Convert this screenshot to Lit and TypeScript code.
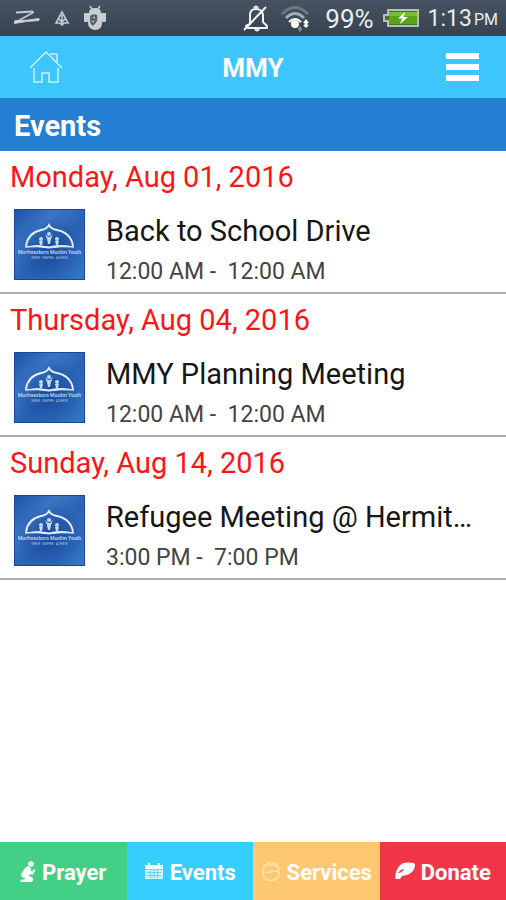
import { LitElement, html, css, svg } from "lit";
import { customElement, property } from "lit/decorators.js";

interface EventEntry {
  date: string;
  title: string;
  time: string;
}

const EVENTS: EventEntry[] = [
  { date: "Monday, Aug 01, 2016", title: "Back to School Drive", time: "12:00 AM -  12:00 AM" },
  { date: "Thursday, Aug 04, 2016", title: "MMY Planning Meeting", time: "12:00 AM -  12:00 AM" },
  { date: "Sunday, Aug 14, 2016", title: "Refugee Meeting @ Hermit…", time: "3:00 PM -  7:00 PM" },
];

@customElement("status-bar")
class StatusBar extends LitElement {
  static styles = css`
    :host {
      display: flex;
      align-items: center;
      justify-content: space-between;
      height: 36px;
      padding: 0 8px 0 14px;
      background: linear-gradient(#465362, #36424e);
      color: #e8edf2;
      line-height: 36px;
    }
    .group {
      display: flex;
      align-items: center;
    }
    .left {
      gap: 14px;
    }
    .wifi {
      margin-left: 12px;
    }
    .percent {
      margin: 2px 0 0 14px;
      font-size: 26px;
    }
    .battery {
      margin: 0 8px 0 8px;
    }
    .clock {
      margin-top: 2px;
      font-size: 23px;
    }
    .meridiem {
      font-size: 16px;
      margin: 4px 0 0 2px;
    }
    svg {
      display: block;
    }
  `;
  render() {
    return html`
      <div class="group left">
        <svg width="26" height="20" viewBox="0 0 26 20" fill="none" stroke="#c3c9cf" stroke-linejoin="round">
          <path d="M2 4.500L19 3.500" stroke-width="2" />
          <path d="M20 4L4 13" stroke-width="1.500" />
          <path d="M0 15.500L1 12.500Q12 13 25 10.500L25 12.500Q12 13 0 15.500Z" fill="#d5dadf" stroke-width="1" />
        </svg>
        <svg width="16" height="20" viewBox="0 0 16 20" fill="none" stroke="#c3c9cf" stroke-width="1.600">
          <path d="M8 4L2 15H6L8 17L10 15H14ZM8 7V16M5 11L8 14L11 11" />
        </svg>
        <svg width="22" height="26" viewBox="0 0 22 26">
          <path d="M6 1L8 4M16 1L14 4" stroke="#c9ced3" stroke-width="1.500" />
          <path d="M5 8Q5 3 11 3Q17 3 17 8Z" fill="#c9ced3" />
          <rect x="0" y="8" width="4" height="9" rx="1" fill="#c9ced3" />
          <rect x="18" y="8" width="4" height="9" rx="1" fill="#c9ced3" />
          <path d="M4 8H18V18Q18 25 11 25Q4 24 4 18Z" fill="#c9ced3" />
          <path d="M6 11Q9 8 13 10Q15 16 9 21Q6 19 6 16Z" fill="#59636e" />
          <path d="M9 12L11 13M8 16L10 17" stroke="#dfe3e6" />
        </svg>
      </div>
      <div class="group">
        <svg width="26" height="28" viewBox="0 0 26 28" fill="none" stroke="#eef2f5" stroke-width="2">
          <path d="M7 20V11Q7 5 13 5Q19 5 20 11V18L24 22V24H5L3 22Z" stroke-linejoin="round" />
          <path d="M11 4Q13 1 15 4M12 25Q14 28 16 25M1 26L23 3" />
        </svg>
        <svg class="wifi" width="30" height="28" viewBox="0 0 30 28" fill="none">
          <path d="M1 10Q14 -3 27 10" stroke="#6d7883" stroke-width="3" />
          <path d="M5 14Q14 5 23 14" stroke="#a4adb5" stroke-width="3" />
          <path d="M8 18Q14 12 20 18" stroke="#fff" stroke-width="2" />
          <circle cx="14" cy="20" r="4" fill="#fff" />
          <path d="M25 15L28 19H26.500V21H28L25 24L22 21H23.500V19H22Z" fill="#fff" />
          <path d="M19 22L21 25L19 28L17 25Z" fill="#89939c" />
        </svg>
        <span class="percent">99%</span>
        <svg class="battery" width="38" height="20" viewBox="0 0 38 20">
          <path d="M5 1H37V19H5V14H1V6H5Z" fill="#b7bcc1" />
          <path d="M7 3H35V17H7V12H3V8H7Z" fill="#46751b" />
          <rect x="7" y="4" width="28" height="12" fill="#58a416" />
          <rect x="7" y="4" width="28" height="4" fill="#75bf2d" />
          <path d="M23 4L16 10.500H20L18 16L26 9H21.500Z" fill="#fff" />
        </svg>
        <span class="clock">1:13</span><span class="meridiem">PM</span>
      </div>
    `;
  }
}

@customElement("event-item")
class EventItem extends LitElement {
  @property({ attribute: false }) entry!: EventEntry;
  static styles = css`
    :host {
      display: block;
      box-sizing: border-box;
      height: 143px;
      padding-top: 8px;
      border-bottom: 2px solid #ababab;
      background: #fff;
    }
    .date {
      margin: 0;
      padding-left: 10px;
      font-size: 29px;
      line-height: 36px;
      font-weight: 400;
      color: #fa1616;
    }
    .row {
      display: flex;
      gap: 21px;
      padding: 14px 14px 0;
    }
    .logo {
      flex: none;
      width: 71px;
      height: 71px;
    }
    .body {
      min-width: 0;
    }
    .title {
      margin: 4px 0 0;
      font-size: 29px;
      line-height: 36px;
      font-weight: 400;
      color: #161616;
      white-space: nowrap;
      overflow: hidden;
      text-overflow: ellipsis;
    }
    .time {
      margin: 9px 0 0;
      font-size: 23px;
      line-height: 28px;
      color: #444;
      white-space: pre;
    }
  `;
  render() {
    return html`
      <h2 class="date">${this.entry.date}</h2>
      <div class="row">
        <svg class="logo" viewBox="0 0 71 71" role="img" aria-label="Murfreesboro Muslim Youth">
          <defs>
            <linearGradient id="base" x1="0" y1="0" x2="1" y2="1">
              <stop offset="0" stop-color="#1d50a4" />
              <stop offset="0.3" stop-color="#3a76c4" />
              <stop offset="0.55" stop-color="#2a62b4" />
              <stop offset="1" stop-color="#3578c8" />
            </linearGradient>
            <radialGradient id="shade" cx="0.5" cy="0.6" r="0.5">
              <stop offset="0" stop-color="#0e3a8c" stop-opacity="0.6" />
              <stop offset="1" stop-color="#0e3a8c" stop-opacity="0" />
            </radialGradient>
          </defs>
          <rect width="71" height="71" fill="url(#base)" />
          <rect width="71" height="71" fill="url(#shade)" />
          <rect x="0.5" y="0.5" width="70" height="70" fill="none" stroke="#1747a0" />
          <path d="M12 37Q14 24 27 21Q33 20 35 16Q37 20 43 21Q57 24 59 37" fill="none" stroke="#e3eefb" stroke-width="1.800" />
          <path d="M11 38Q24 35 35 38Q46 35 60 38Q46 37 35 39Q24 37 11 38Z" fill="#e3eefb" stroke="#e3eefb" />
          <g fill="#c3d8f2">
            <circle cx="27" cy="30" r="2" /><path d="M25 32H29L28 36H26Z" />
            <circle cx="35" cy="25" r="2" /><path d="M31 25L34 28H36L39 25L37 30L36 35H34L33 30Z" />
            <circle cx="43" cy="30" r="2" /><path d="M41 32H45L44 36H42Z" />
          </g>
          <g fill="#b4cdec" text-anchor="middle" font-family="Roboto, sans-serif">
            <text x="35.500" y="45" font-size="5" font-weight="700">Murfreesboro Muslim Youth</text>
            <text x="35.500" y="50" font-size="3">SERVE · INSPIRE · ACHIEVE</text>
          </g>
        </svg>
        <div class="body">
          <h3 class="title">${this.entry.title}</h3>
          <p class="time">${this.entry.time}</p>
        </div>
      </div>
    `;
  }
}

const prayerIcon = svg`<svg width="16" height="22" viewBox="0 0 16 22" fill="#fff">
  <circle cx="11" cy="3" r="2.800"/>
  <path d="M8 5Q11 6 11 9L12 11L14 8L15.500 9L12.500 14L10 13L9 15L13 17L13 19L12 21H1L0 19L6 18L2 16Q0 14 3 10Q5 6 8 5Z"/>
</svg>`;
const calendarIcon = svg`<svg width="20" height="20" viewBox="0 0 20 20">
  <path d="M1 3H19V17H1Z" fill="#fff" fill-opacity="0.75"/>
  <path d="M1 3H19V7H1ZM4 1H6V4H4ZM14 1H16V4H14Z" fill="#fff"/>
  <path d="M1 7.500H19M3 10.500H17M3 13.500H17M6.500 8V16M10 8V16M13.500 8V16" stroke="#35ceff" stroke-width="0.700"/>
</svg>`;
const servicesIcon = svg`<svg width="20" height="20" viewBox="0 0 20 20" fill="none" stroke="#ffe3b2" stroke-width="1.500">
  <path d="M6 2Q10 -1 15 2Q18 4 18 10Q18 15 15 17Q10 20 5 17Q2 15 2 10Q2 4 6 2Z"/>
  <path d="M4 4Q10 1 17 5M4 10Q8 11 11 9.500Q14 9 17 9.500" />
</svg>`;
const donateIcon = svg`<svg width="20" height="20" viewBox="0 0 20 20" fill="#fff">
  <path d="M1 10Q3 4 8 1Q13 0 19 1Q21 3 19 7Q17 11 12 13L7 14L5 17H1L0 15Z"/>
  <path d="M3 11Q5 8 8 7L9 8Q7 10 4 11Z" fill="#f23648"/>
</svg>`;

@customElement("app-root")
class AppRoot extends LitElement {
  static styles = css`
    :host {
      display: flex;
      flex-direction: column;
      min-height: 100vh;
      background: #fff;
      font-family: Roboto, "Liberation Sans", sans-serif;
    }
    .header {
      display: grid;
      grid-template-columns: 1fr auto 1fr;
      align-items: center;
      height: 62px;
      padding: 0 26px;
      background: #3dc5fd;
    }
    .title {
      margin: 2px 0 0;
      font-size: 26px;
      line-height: 32px;
      font-weight: 700;
      color: #fff;
    }
    button {
      padding: 0;
      border: 0;
      background: none;
    }
    .menu {
      justify-self: end;
    }
    .home {
      justify-self: start;
    }
    svg {
      display: block;
    }
    .section {
      margin: 0;
      padding: 4px 14px 0;
      background: #247ed2;
      color: #fff;
      font-size: 29px;
      line-height: 49px;
      font-weight: 700;
    }
    main {
      flex: 1;
    }
    .tabs {
      display: grid;
      grid-template-columns: repeat(4, 1fr);
      height: 58px;
    }
    .tab {
      display: flex;
      align-items: center;
      justify-content: center;
      gap: 6px;
      padding-top: 2px;
      color: #fff;
      font-size: 22px;
      font-weight: 700;
      text-decoration: none;
      white-space: nowrap;
    }
    .prayer {
      background: #44cf86;
    }
    .events {
      background: #36ceff;
    }
    .services {
      background: #fec871;
    }
    .donate {
      background: #f23648;
    }
  `;
  render() {
    return html`
      <status-bar></status-bar>
      <header class="header">
        <button class="home" aria-label="Home">
          <svg width="40" height="36" viewBox="0 0 40 36" fill="none" stroke="#c8f2ff" stroke-width="1.500">
            <path d="M4 19L20 3L36 19" />
            <path d="M8 19V33H16V24H23V33H32V19M25 6V5H31V13" />
          </svg>
        </button>
        <h1 class="title">MMY</h1>
        <button class="menu" aria-label="Menu">
          <svg width="34" height="30" viewBox="0 0 34 30" fill="#fff">
            <path d="M0 1H33V7H0ZM0 12H33V18H0ZM0 23H33V29H0Z" />
          </svg>
        </button>
      </header>
      <h2 class="section">Events</h2>
      <main>${EVENTS.map((entry) => html`<event-item .entry=${entry}></event-item>`)}</main>
      <nav class="tabs">
        <a class="tab prayer" href="#prayer">${prayerIcon}Prayer</a>
        <a class="tab events" href="#events">${calendarIcon}Events</a>
        <a class="tab services" href="#services">${servicesIcon}Services</a>
        <a class="tab donate" href="#donate">${donateIcon}Donate</a>
      </nav>
    `;
  }
}
